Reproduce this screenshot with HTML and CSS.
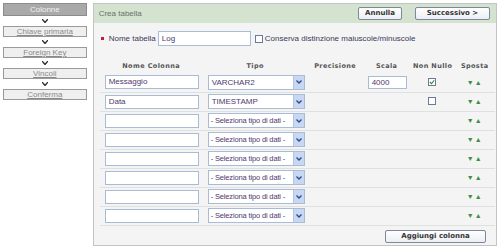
FILE: index.html
```html
<!DOCTYPE html>
<html lang="it">
<head>
    <meta charset="UTF-8">
    <meta name="viewport" content="width=device-width, initial-scale=1.0">
    <title>Crea tabella</title>
    <link rel="stylesheet" href="styles.css">
</head>
<body>
    <div class="page">
        <div class="steps">
            <div class="step current">Colonne</div>
            <div class="sep"><svg width="6" height="4" viewBox="0 0 6 4"><path d="M0 0 L3 3.5 L6 0" fill="none" stroke="#333" stroke-width="1.4"/></svg></div>
            <div class="step"><a href="#">Chiave primaria</a></div>
            <div class="sep"><svg width="6" height="4" viewBox="0 0 6 4"><path d="M0 0 L3 3.5 L6 0" fill="none" stroke="#333" stroke-width="1.4"/></svg></div>
            <div class="step"><a href="#">Foreign Key</a></div>
            <div class="sep"><svg width="6" height="4" viewBox="0 0 6 4"><path d="M0 0 L3 3.5 L6 0" fill="none" stroke="#333" stroke-width="1.4"/></svg></div>
            <div class="step"><a href="#">Vincoli</a></div>
            <div class="sep"><svg width="6" height="4" viewBox="0 0 6 4"><path d="M0 0 L3 3.5 L6 0" fill="none" stroke="#333" stroke-width="1.4"/></svg></div>
            <div class="step"><a href="#">Conferma</a></div>
        </div>

        <div class="panel">
            <div class="panel-head">
                <span class="title">Crea tabella</span>
                <div class="actions">
                    <button class="btn btn-cancel">Annulla</button>
                    <button class="btn btn-next">Successivo &gt;</button>
                </div>
            </div>

            <div class="name-row">
                <span class="req"></span>
                <label class="lbl">Nome tabella</label>
                <div class="field name-field">Log</div>
                <span class="check"></span>
                <label class="lbl">Conserva distinzione maiuscole/minuscole</label>
            </div>

            <table class="cols">
                <tr class="head">
                    <th class="c1">Nome Colonna</th>
                    <th class="c2">Tipo</th>
                    <th class="c3">Precisione</th>
                    <th class="c4">Scala</th>
                    <th class="c5">Non Nullo</th>
                    <th class="c6">Sposta</th>
                </tr>
                <tr>
                    <td><div class="field col-field">Messaggio</div></td>
                    <td><div class="select"><span class="val">VARCHAR2</span><span class="drop"><svg width="6" height="4" viewBox="0 0 6 4"><path d="M0.5 0.5 L3 3 L5.5 0.5" fill="none" stroke="#2c4a8a" stroke-width="1.3"/></svg></span></div></td>
                    <td></td>
                    <td><div class="field scale-field">4000</div></td>
                    <td><span class="check on"><svg width="7" height="7" viewBox="0 0 7 7"><path d="M1 3.5 L3 5.5 L6 1.5" fill="none" stroke="#2a8a2a" stroke-width="1.3"/></svg></span></td>
                    <td class="move">&#9660;&#9650;</td>
                </tr>
                <tr>
                    <td><div class="field col-field">Data</div></td>
                    <td><div class="select"><span class="val">TIMESTAMP</span><span class="drop"><svg width="6" height="4" viewBox="0 0 6 4"><path d="M0.5 0.5 L3 3 L5.5 0.5" fill="none" stroke="#2c4a8a" stroke-width="1.3"/></svg></span></div></td>
                    <td></td>
                    <td></td>
                    <td><span class="check"></span></td>
                    <td class="move">&#9660;&#9650;</td>
                </tr>
                <tr>
                    <td><div class="field col-field"></div></td>
                    <td><div class="select"><span class="val pick">- Seleziona tipo di dati -</span><span class="drop"><svg width="6" height="4" viewBox="0 0 6 4"><path d="M0.5 0.5 L3 3 L5.5 0.5" fill="none" stroke="#2c4a8a" stroke-width="1.3"/></svg></span></div></td>
                    <td></td><td></td><td></td>
                    <td class="move">&#9660;&#9650;</td>
                </tr>
                <tr>
                    <td><div class="field col-field"></div></td>
                    <td><div class="select"><span class="val pick">- Seleziona tipo di dati -</span><span class="drop"><svg width="6" height="4" viewBox="0 0 6 4"><path d="M0.5 0.5 L3 3 L5.5 0.5" fill="none" stroke="#2c4a8a" stroke-width="1.3"/></svg></span></div></td>
                    <td></td><td></td><td></td>
                    <td class="move">&#9660;&#9650;</td>
                </tr>
                <tr>
                    <td><div class="field col-field"></div></td>
                    <td><div class="select"><span class="val pick">- Seleziona tipo di dati -</span><span class="drop"><svg width="6" height="4" viewBox="0 0 6 4"><path d="M0.5 0.5 L3 3 L5.5 0.5" fill="none" stroke="#2c4a8a" stroke-width="1.3"/></svg></span></div></td>
                    <td></td><td></td><td></td>
                    <td class="move">&#9660;&#9650;</td>
                </tr>
                <tr>
                    <td><div class="field col-field"></div></td>
                    <td><div class="select"><span class="val pick">- Seleziona tipo di dati -</span><span class="drop"><svg width="6" height="4" viewBox="0 0 6 4"><path d="M0.5 0.5 L3 3 L5.5 0.5" fill="none" stroke="#2c4a8a" stroke-width="1.3"/></svg></span></div></td>
                    <td></td><td></td><td></td>
                    <td class="move">&#9660;&#9650;</td>
                </tr>
                <tr>
                    <td><div class="field col-field"></div></td>
                    <td><div class="select"><span class="val pick">- Seleziona tipo di dati -</span><span class="drop"><svg width="6" height="4" viewBox="0 0 6 4"><path d="M0.5 0.5 L3 3 L5.5 0.5" fill="none" stroke="#2c4a8a" stroke-width="1.3"/></svg></span></div></td>
                    <td></td><td></td><td></td>
                    <td class="move">&#9660;&#9650;</td>
                </tr>
                <tr>
                    <td><div class="field col-field"></div></td>
                    <td><div class="select"><span class="val pick">- Seleziona tipo di dati -</span><span class="drop"><svg width="6" height="4" viewBox="0 0 6 4"><path d="M0.5 0.5 L3 3 L5.5 0.5" fill="none" stroke="#2c4a8a" stroke-width="1.3"/></svg></span></div></td>
                    <td></td><td></td><td></td>
                    <td class="move">&#9660;&#9650;</td>
                </tr>
            </table>

            <div class="foot">
                <button class="btn btn-add">Aggiungi colonna</button>
            </div>
        </div>
    </div>
</body>
</html>
```

FILE: styles.css
```css
*{
    padding: 0;
    margin: 0;
    box-sizing: border-box;
}
body{
    background: #fff;
    font-family: "Liberation Sans", Arial, sans-serif;
    font-size: 8px;
    color: #333;
}
.page{
    display: flex;
    padding: 3px;
    gap: 6px;
}

/* wizard steps */
.steps{
    width: 84px;
    display: flex;
    flex-direction: column;
}
.step{
    height: 11px;
    border: 1px solid #9a9a9a;
    background: #efefef;
    text-align: center;
    line-height: 9px;
    font-size: 8px;
}
.step a{
    color: #8a8a8a;
}
.step.current{
    height: 13px;
    line-height: 11px;
    background: #a9a9a9;
    border-color: #8c8c8c;
    color: #f2f2f2;
}
.sep{
    height: 10px;
    display: flex;
    justify-content: center;
    align-items: center;
}

/* main panel */
.panel{
    width: 406px;
    height: 243px;
    border: 1px solid #c4c4c4;
    background: #f4f4f4;
    display: flex;
    flex-direction: column;
}
.panel-head{
    height: 19px;
    background: #d3e3cf;
    display: flex;
    align-items: center;
    justify-content: space-between;
    padding: 0 6px 0 5px;
}
.title{
    color: #66736a;
    font-size: 8px;
}
.actions{
    display: flex;
    gap: 13px;
}
.btn{
    height: 13px;
    border: 1px solid #7d889c;
    border-radius: 2px;
    background: linear-gradient(#ffffff, #eceef2);
    font-family: "DejaVu Sans", Verdana, sans-serif;
    font-weight: bold;
    font-size: 7px;
    color: #333;
    line-height: 11px;
}
.btn-cancel{
    width: 44px;
}
.btn-next{
    width: 75px;
}

.name-row{
    display: flex;
    align-items: center;
    height: 15px;
    margin: 8px 0 0 7px;
}
.req{
    width: 3px;
    height: 3px;
    background: #c0203a;
    margin-right: 5px;
}
.lbl{
    color: #3a3a5a;
}
.field{
    height: 14px;
    background: #fff;
    border: 1px solid #a8bcd6;
    color: #4e3a6e;
    padding-left: 3px;
    line-height: 12px;
}
.name-field{
    width: 93px;
    height: 15px;
    line-height: 13px;
    margin: 0 4px 0 2px;
}
.check{
    display: inline-flex;
    width: 8px;
    height: 8px;
    border: 1px solid #6a7a98;
    background: #fff;
    margin-right: 2px;
    align-items: center;
    justify-content: center;
}
.check svg{
    width: 6px;
    height: 6px;
}

/* column table */
.cols{
    margin: 13px 0 0 6px;
    border-collapse: collapse;
    table-layout: fixed;
    width: 395px;
}
.cols th{
    height: 14px;
    font-family: "DejaVu Sans", Verdana, sans-serif;
    font-size: 6.5px;
    font-weight: bold;
    letter-spacing: 0.4px;
    color: #555;
    text-align: center;
}
.c1{ width: 103px; }
.c2{ width: 105px; }
.c3{ width: 55px; }
.c4{ width: 48px; }
.c5{ width: 44px; }
.c6{ width: 40px; }
.cols td{
    height: 19px;
    border-bottom: 1px solid #e0e0e0;
    text-align: center;
    vertical-align: middle;
}
.col-field{
    width: 94px;
    margin-left: 5px;
    text-align: left;
}
.scale-field{
    width: 39px;
    height: 13px;
    margin-left: 5px;
    text-align: left;
}
.select{
    display: flex;
    width: 97px;
    height: 15px;
    margin-left: 5px;
    border: 1px solid #a8bcd6;
    background: #fff;
    text-align: left;
}
.val{
    flex: 1;
    padding-left: 3px;
    line-height: 13px;
    color: #4e3a6e;
    white-space: nowrap;
    overflow: hidden;
}
.val.pick{
    padding-left: 2px;
    font-size: 7.5px;
    letter-spacing: -0.15px;
}
.drop{
    width: 11px;
    background: #c8d8f2;
    border-left: 1px solid #b4c6e6;
    display: flex;
    align-items: center;
    justify-content: center;
}
.move{
    color: #3f8f3f;
    font-size: 7px;
    letter-spacing: 1px;
}

.foot{
    display: flex;
    justify-content: flex-end;
    padding: 4px 10px 0 0;
}
.btn-add{
    width: 101px;
}
```
